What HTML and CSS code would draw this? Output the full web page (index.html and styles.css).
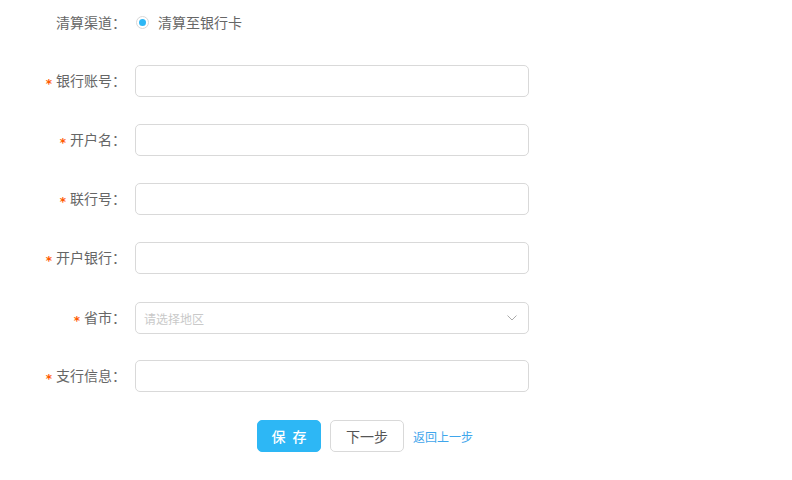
FILE: index.html
```html
<!DOCTYPE html>
<html lang="zh-CN">
<head>
<meta charset="utf-8">
<link rel="stylesheet" href="styles.css">
</head>
<body>
<form class="form">
  <div class="row">
    <label class="label">清算渠道：</label>
    <div class="field radio-field">
      <span class="radio"><span class="dot"></span></span>
      <span class="radio-text">清算至银行卡</span>
    </div>
  </div>
  <div class="row">
    <label class="label"><span class="req">*</span>银行账号：</label>
    <div class="field"><input class="input" type="text"></div>
  </div>
  <div class="row">
    <label class="label"><span class="req">*</span>开户名：</label>
    <div class="field"><input class="input" type="text"></div>
  </div>
  <div class="row">
    <label class="label"><span class="req">*</span>联行号：</label>
    <div class="field"><input class="input" type="text"></div>
  </div>
  <div class="row">
    <label class="label"><span class="req">*</span>开户银行：</label>
    <div class="field"><input class="input" type="text"></div>
  </div>
  <div class="row row-select">
    <label class="label"><span class="req">*</span>省市：</label>
    <div class="field">
      <div class="input select">
        <span class="placeholder">请选择地区</span>
        <svg class="chevron" width="10" height="6" viewBox="0 0 10 6"><path d="M0.5 0.5 L5 5 L9.5 0.5" fill="none" stroke="#aaa" stroke-width="1"/></svg>
      </div>
    </div>
  </div>
  <div class="row row-after">
    <label class="label"><span class="req">*</span>支行信息：</label>
    <div class="field"><input class="input" type="text"></div>
  </div>
  <div class="actions">
    <button type="button" class="btn btn-primary">保 存</button>
    <button type="button" class="btn btn-default">下一步</button>
    <a class="link" href="#">返回上一步</a>
  </div>
</form>
</body>
</html>
```
FILE: styles.css
```css
html, body {
  margin: 0;
  padding: 0;
  background: #fff;
}
body {
  font-family: "Noto Sans CJK SC", "Liberation Sans", sans-serif;
  font-size: 14px;
  color: #666;
}
.form {
  display: flex;
  flex-direction: column;
  gap: 27px;
  padding-top: 6px;
}
.row {
  display: flex;
  align-items: center;
  height: 32px;
}
.row-select {
  margin-top: 1px;
}
.row-after {
  margin-top: -1px;
}
.label {
  width: 126px;
  flex: none;
  text-align: right;
  font-size: 14px;
  color: #666;
  line-height: 32px;
  white-space: nowrap;
}
.req {
  color: #ff5a00;
  font-family: "DejaVu Sans", sans-serif;
  font-size: 12px;
  font-weight: bold;
  margin-right: 4px;
  position: relative;
  top: 2px;
}
.field {
  margin-left: 9px;
  width: 394px;
}
.radio-field {
  display: flex;
  align-items: center;
}
.radio {
  width: 13px;
  height: 13px;
  border: 1px solid #d8d8d8;
  border-radius: 50%;
  display: flex;
  align-items: center;
  justify-content: center;
  margin-left: 1px;
  box-sizing: border-box;
}
.dot {
  width: 7px;
  height: 7px;
  border-radius: 50%;
  background: #2db7f5;
}
.radio-text {
  margin-left: 9px;
  color: #666;
}
.input {
  box-sizing: border-box;
  width: 394px;
  height: 32px;
  border: 1px solid #d9d9d9;
  border-radius: 5px;
  background: #fff;
  outline: none;
  padding: 0 8px;
  font-family: inherit;
  font-size: 12px;
  display: block;
}
.select {
  display: flex;
  align-items: center;
  justify-content: space-between;
}
.placeholder {
  color: #c9c9c9;
  font-size: 12px;
}
.chevron {
  margin-right: 3px;
}
.actions {
  display: flex;
  align-items: center;
  padding-left: 257px;
  height: 32px;
  margin-top: 1px;
}
.btn {
  box-sizing: border-box;
  height: 32px;
  border-radius: 5px;
  font-family: inherit;
  font-size: 14px;
  cursor: pointer;
  padding: 0;
}
.btn-primary {
  width: 64px;
  background: #2db7f5;
  border: 1px solid #2db7f5;
  color: #fff;
  letter-spacing: 2px;
  text-indent: 2px;
  font-weight: 500;
}
.btn-default {
  width: 74px;
  margin-left: 9px;
  background: #fff;
  border: 1px solid #d9d9d9;
  color: #555;
}
.link {
  margin-left: 9px;
  font-size: 12px;
  color: #3fa6ec;
  text-decoration: none;
}
```
